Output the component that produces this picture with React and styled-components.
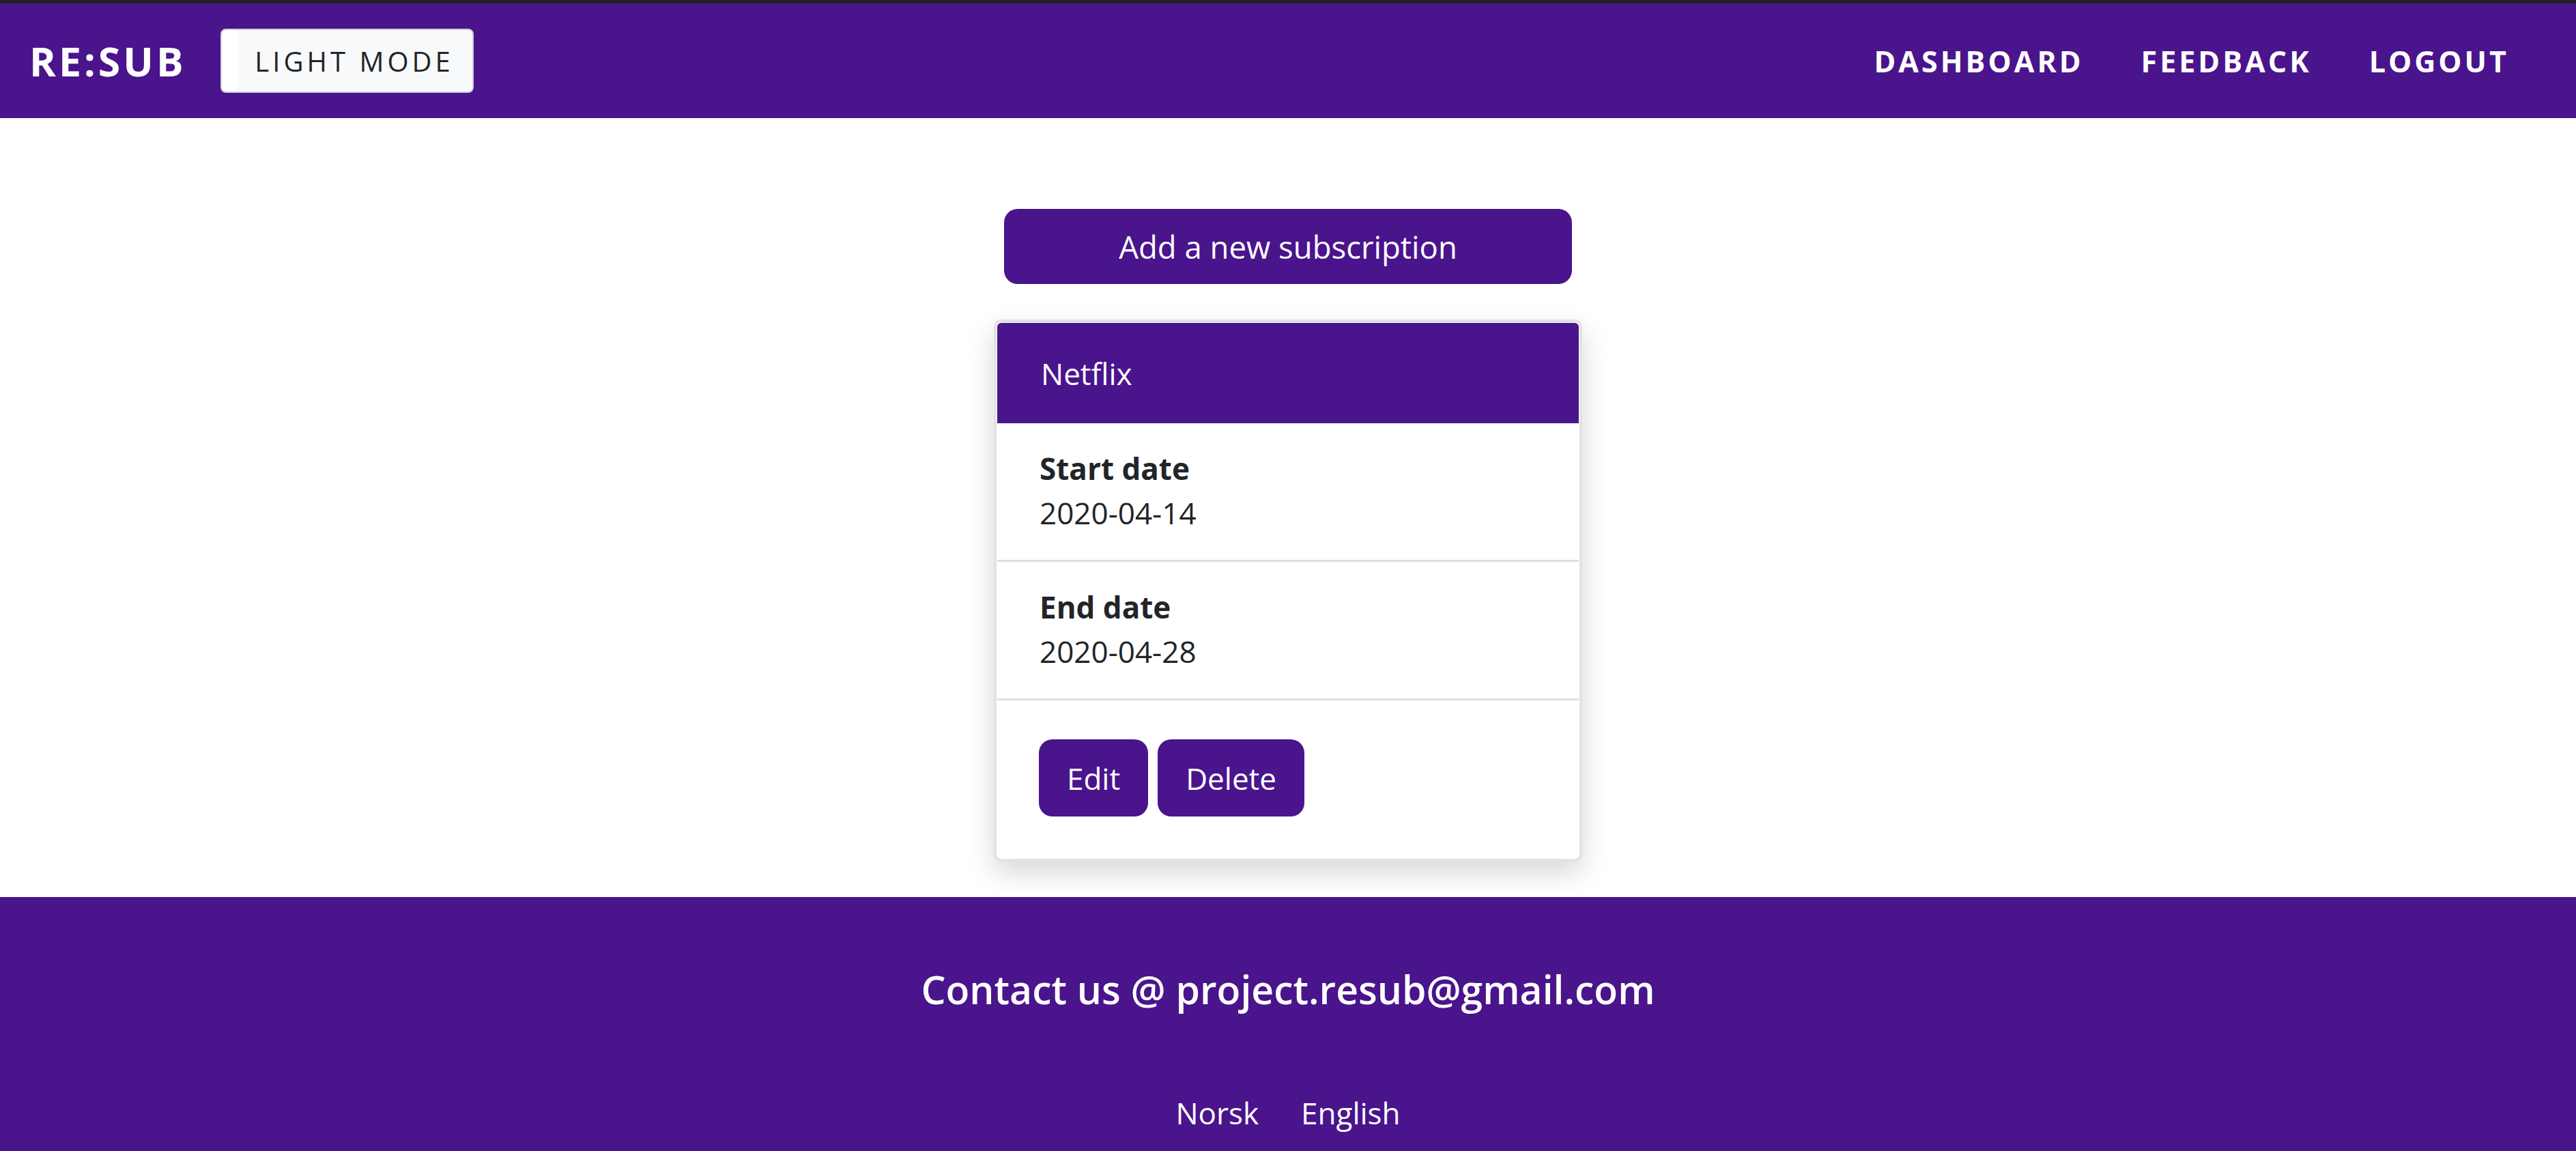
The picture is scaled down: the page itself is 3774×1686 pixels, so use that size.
import React from 'react';
import styled, {createGlobalStyle} from 'styled-components';

const purple = '#4a148c';
const ink = '#212529';

const GlobalStyle = createGlobalStyle`
  html, body {
    margin: 0;
    padding: 0;
    background: #fff;
  }
  body {
    font-family: "Open Sans", "Noto Sans", "Liberation Sans", sans-serif;
    color: ${ink};
  }
  * {
    box-sizing: border-box;
  }
`;

const Page = styled.div`
  height: 1686px;
  overflow: hidden;
  display: flex;
  flex-direction: column;
`;

const Navbar = styled.nav`
  flex: none;
  height: 173px;
  border-top: 5px solid #222;
  background: ${purple};
  display: flex;
  align-items: center;
  padding: 0 98px 0 43px;
`;

const Brand = styled.a`
  color: #fff;
  font-weight: 700;
  font-size: 59px;
  letter-spacing: 4px;
  text-decoration: none;
`;

const ModeButton = styled.button`
  position: relative;
  margin-left: 50px;
  width: 371px;
  height: 94px;
  background: #f8f9fa;
  border: 2px solid #cfd2d6;
  border-radius: 8px;
  font-family: inherit;
  font-size: 40px;
  letter-spacing: 5px;
  color: ${ink};
  padding: 0 0 0 22px;
  overflow: hidden;

  &::before {
    content: '';
    position: absolute;
    left: 0;
    top: 0;
    bottom: 0;
    width: 24px;
    background: #fff;
    border-radius: 0 6px 6px 0;
  }
`;

const NavLinks = styled.div`
  margin-left: auto;
  display: flex;
  gap: 84px;
`;

const NavLink = styled.a`
  color: #fff;
  font-weight: 700;
  font-size: 43px;
  letter-spacing: 4px;
  text-decoration: none;
`;

const Main = styled.main`
  flex: 1;
  display: flex;
  flex-direction: column;
  align-items: center;
  padding: 133px 0 52px;
`;

const PurpleButton = styled.button`
  background: ${purple};
  color: #fff;
  border: none;
  border-radius: 20px;
  font-family: inherit;
  font-size: ${({big}) => (big ? 45.5 : 44)}px;
  height: ${({tall}) => tall || 113}px;
  width: ${({wide}) => (wide ? `${wide}px` : 'auto')};
  padding: 0 ${({pad}) => pad || 0}px;
  cursor: pointer;
`;

const Card = styled.div`
  margin-top: 52px;
  width: 862px;
  border: 4px solid #e2e2e2;
  border-radius: 10px;
  background: #fff;
  padding: 1px;
  box-shadow: 0 16px 40px rgba(0, 0, 0, 0.16);
`;

const CardHeader = styled.div`
  height: 147px;
  background: ${purple};
  color: #fff;
  border-radius: 6px 6px 0 0;
  display: flex;
  align-items: center;
  padding-left: 64px;
  font-size: 44px;
`;

const Item = styled.div`
  height: 203px;
  border-bottom: 3px solid #dfdfdf;
  padding: 34px 0 0 62px;
  font-size: 44px;
  line-height: 65px;
`;

const Label = styled.div`
  font-weight: 700;
`;

const Actions = styled.div`
  display: flex;
  gap: 14px;
  padding: 57px 0 61px 61px;
`;

const Footer = styled.footer`
  flex: none;
  background: ${purple};
  color: #fff;
  height: 372px;
  display: flex;
  flex-direction: column;
  align-items: center;
  padding-top: 96px;
`;

const Contact = styled.h3`
  margin: 0;
  font-size: 57px;
  font-weight: 600;
`;

const Langs = styled.div`
  display: flex;
  gap: 62px;
  margin-top: 112px;
`;

const Lang = styled.a`
  color: #fff;
  font-size: 44px;
  text-decoration: none;
`;

export default function App() {
  return (
    <Page>
      <GlobalStyle />
      <Navbar>
        <Brand href="#">RE:SUB</Brand>
        <ModeButton>LIGHT MODE</ModeButton>
        <NavLinks>
          <NavLink href="#">DASHBOARD</NavLink>
          <NavLink href="#">FEEDBACK</NavLink>
          <NavLink href="#">LOGOUT</NavLink>
        </NavLinks>
      </Navbar>
      <Main>
        <PurpleButton big wide={832} tall={110}>Add a new subscription</PurpleButton>
        <Card>
          <CardHeader>Netflix</CardHeader>
          <Item>
            <Label>Start date</Label>
            <div>2020-04-14</div>
          </Item>
          <Item>
            <Label>End date</Label>
            <div>2020-04-28</div>
          </Item>
          <Actions>
            <PurpleButton pad={41}>Edit</PurpleButton>
            <PurpleButton pad={41}>Delete</PurpleButton>
          </Actions>
        </Card>
      </Main>
      <Footer>
        <Contact>Contact us @ project.resub@gmail.com</Contact>
        <Langs>
          <Lang href="#">Norsk</Lang>
          <Lang href="#">English</Lang>
        </Langs>
      </Footer>
    </Page>
  );
}
